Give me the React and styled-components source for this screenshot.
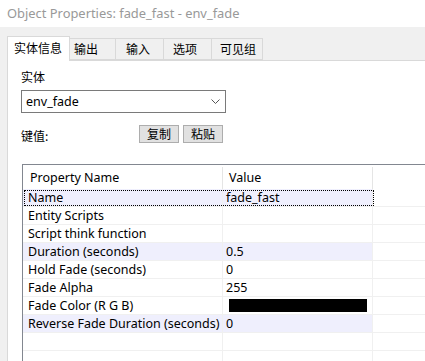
import React from "react";
import styled, { createGlobalStyle } from "styled-components";

const GlobalStyle = createGlobalStyle`
  html, body {
    margin: 0;
    padding: 0;
    background: #f0f0f0;
    overflow: hidden;
  }
  body {
    font-family: "Noto Sans", "Noto Sans CJK SC", sans-serif;
    font-size: 12.5px;
    color: #000;
  }
`;

const Window = styled.div`
  width: 425px;
  height: 361px;
  display: flex;
  flex-direction: column;
  background: #f0f0f0;
  overflow: hidden;
`;

const TitleBar = styled.div`
  height: 27px;
  flex: none;
  background: #fff;
  color: #999;
  font-size: 12.9px;
  line-height: 26px;
  padding-left: 7px;
  box-sizing: border-box;
`;

const TabStrip = styled.div`
  display: flex;
  align-items: flex-end;
  margin-top: 10px;
  padding-left: 7px;
  height: 23px;
  position: relative;
  z-index: 1;
`;

const Tab = styled.div`
  box-sizing: border-box;
  width: ${(p) => p.$w}px;
  height: ${(p) => (p.$active ? 25 : 22)}px;
  margin-bottom: ${(p) => (p.$active ? -1 : 0)}px;
  margin-left: ${(p) => (p.$first ? 0 : -1)}px;
  border: 1px solid #d9d9d9;
  border-bottom: ${(p) => (p.$active ? "none" : "1px solid #d9d9d9")};
  background: ${(p) => (p.$active ? "#fff" : "#f0f0f0")};
  font-family: "Noto Sans CJK SC", sans-serif;
  font-size: 12px;
  line-height: ${(p) => (p.$active ? 22 : 20)}px;
  padding-left: ${(p) => p.$pad}px;
  position: relative;
  z-index: ${(p) => (p.$active ? 2 : 1)};
`;

const Panel = styled.div`
  flex: 1;
  margin-left: 7px;
  border-top: 1px solid #d9d9d9;
  border-left: 1px solid #d9d9d9;
  background: #fff;
  padding: 8px 0 0 13px;
  display: flex;
  flex-direction: column;
`;

const Label = styled.div`
  font-family: "Noto Sans CJK SC", sans-serif;
  font-size: 12px;
  line-height: 16px;
  height: 16px;
`;

const Combo = styled.div`
  box-sizing: border-box;
  margin-top: 5px;
  width: 205px;
  height: 23px;
  border: 1px solid #7a7a7a;
  display: flex;
  align-items: center;
  justify-content: space-between;
  padding: 0 5px 0 4px;
  font-size: 12.5px;
`;

const KeyRow = styled.div`
  margin-top: 12px;
  display: flex;
  align-items: center;
  height: 18px;
`;

const KeyLabel = styled(Label)`
  width: 118px;
  margin-top: 4px;
`;

const Button = styled.div`
  box-sizing: border-box;
  width: 40px;
  height: 18px;
  margin-right: 4px;
  border: 1px solid #adadad;
  background: #e1e1e1;
  font-family: "Noto Sans CJK SC", sans-serif;
  font-size: 12px;
  line-height: 15px;
  text-align: center;
`;

const Table = styled.div`
  margin-top: 21px;
  margin-left: 1px;
  width: 420px;
  flex: 1;
  border-top: 1px solid #828790;
  border-left: 1px solid #828790;
`;

const Row = styled.div`
  display: grid;
  grid-template-columns: 200px 150px 1fr;
  height: ${(p) => (p.$header ? 24 : 18)}px;
  position: relative;
  &::after {
    content: "";
    display: ${(p) => (p.$focus ? "block" : "none")};
    position: absolute;
    left: 1px;
    top: 1px;
    width: 350px;
    height: 16px;
    border: 1px dotted #000;
    box-sizing: border-box;
  }
`;

const Cell = styled.div`
  box-sizing: border-box;
  border-right: 1px solid ${(p) => (p.$header ? "#e5e5e5" : "#f0f0f0")};
  border-bottom: ${(p) => (p.$header ? "none" : "1px solid #f0f0f0")};
  background: ${(p) => (p.$mod ? "#efeffd" : "#fff")};
  padding-left: ${(p) => p.$pad || 5}px;
  font-size: 12.5px;
  line-height: ${(p) => (p.$header ? 24 : 17)}px;
  white-space: nowrap;
  overflow: hidden;
  display: flex;
  align-items: center;
  ${(p) => p.$header && "margin: 2px 0 0; height: 22px;"}
`;

const ColorSwatch = styled.div`
  width: 138px;
  height: 13px;
  background: #000;
  margin-left: 3px;
`;

const Chevron = () => (
  <svg width="9" height="5" viewBox="0 0 9 5">
    <path d="M0.5 0.5 L4.5 4.5 L8.5 0.5" fill="none" stroke="#555" strokeWidth="1" />
  </svg>
);

const tabs = [
  { label: "实体信息", w: 63, pad: 6 },
  { label: "输出", w: 47, pad: 4 },
  { label: "输入", w: 49, pad: 10 },
  { label: "选项", w: 49, pad: 9 },
  { label: "可见组", w: 52, pad: 8 },
];

const rows = [
  { name: "Name", value: "fade_fast", mod: true, focus: true },
  { name: "Entity Scripts", value: "" },
  { name: "Script think function", value: "" },
  { name: "Duration (seconds)", value: "0.5", mod: true },
  { name: "Hold Fade (seconds)", value: "0" },
  { name: "Fade Alpha", value: "255" },
  { name: "Fade Color (R G B)", color: "#000" },
  { name: "Reverse Fade Duration (seconds)", value: "0", mod: true },
  { name: "", value: "" },
  { name: "", value: "" },
];

export default function App() {
  return (
    <Window>
      <GlobalStyle />
      <TitleBar>Object Properties: fade_fast - env_fade</TitleBar>
      <TabStrip>
        {tabs.map((t, i) => (
          <Tab key={t.label} $w={t.w} $pad={t.pad} $active={i === 0} $first={i === 0}>
            {t.label}
          </Tab>
        ))}
      </TabStrip>
      <Panel>
        <Label>实体</Label>
        <Combo>
          <span>env_fade</span>
          <Chevron />
        </Combo>
        <KeyRow>
          <KeyLabel>键值:</KeyLabel>
          <Button>复制</Button>
          <Button>粘贴</Button>
        </KeyRow>
        <Table>
          <Row $header>
            <Cell $header $pad={7}>Property Name</Cell>
            <Cell $header $pad={6}>Value</Cell>
            <Cell $header />
          </Row>
          {rows.map((r, i) => (
            <Row key={i} $focus={r.focus}>
              <Cell $mod={r.mod}>{r.name}</Cell>
              <Cell $mod={r.mod} $pad={3}>
                {r.color ? <ColorSwatch /> : r.value}
              </Cell>
              <Cell />
            </Row>
          ))}
        </Table>
      </Panel>
    </Window>
  );
}
